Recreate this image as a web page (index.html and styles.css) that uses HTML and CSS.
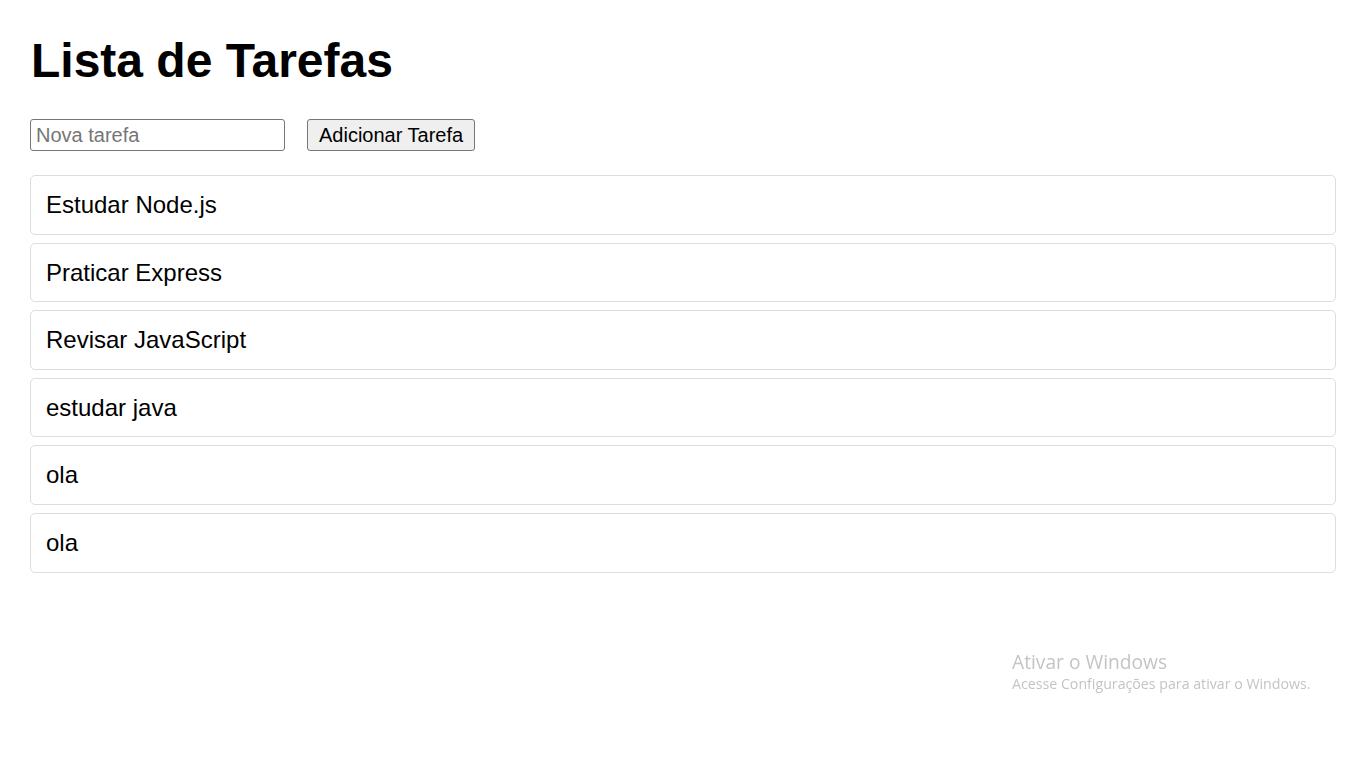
FILE: index.html
```html
<!DOCTYPE html>
<html lang="pt-BR">
<head>
<meta charset="utf-8">
<title>Lista de Tarefas</title>
<link rel="stylesheet" href="styles.css">
</head>
<body>
<main class="page">
  <h1 class="title">Lista de Tarefas</h1>
  <form class="add-form">
    <input class="task-input" type="text" placeholder="Nova tarefa">
    <button class="add-btn" type="button">Adicionar Tarefa</button>
  </form>
  <ul class="task-list">
    <li class="task">Estudar Node.js</li>
    <li class="task">Praticar Express</li>
    <li class="task">Revisar JavaScript</li>
    <li class="task">estudar java</li>
    <li class="task">ola</li>
    <li class="task">ola</li>
  </ul>
</main>
<div class="watermark">
  <div class="wm-title">Ativar o Windows</div>
  <div class="wm-sub">Acesse Configurações para ativar o Windows.</div>
</div>
</body>
</html>
```

FILE: styles.css
```css
html, body {
  margin: 0;
  padding: 0;
  background: #fff;
}
body {
  font-family: "Liberation Sans", Arial, sans-serif;
  color: #000;
}
.page {
  padding: 30px;
}
.title {
  font-size: 48px;
  font-weight: bold;
  line-height: 55px;
  margin: 3px 0 31px 1px;
}
.add-form {
  display: flex;
  align-items: center;
  gap: 22px;
  margin: 0 0 24px 0;
}
.task-input {
  box-sizing: border-box;
  width: 255px;
  height: 32px;
  padding: 0 5px;
  border: 1px solid #767676;
  border-radius: 3px;
  font-family: "Liberation Sans", Arial, sans-serif;
  font-size: 20px;
  color: #000;
  background: #fff;
}
.task-input::placeholder {
  color: #767676;
}
.add-btn {
  box-sizing: border-box;
  height: 32px;
  padding: 0 11px;
  border: 1px solid #767676;
  border-radius: 3px;
  background: #efefef;
  font-family: "Liberation Sans", Arial, sans-serif;
  font-size: 20px;
  color: #000;
}
.task-list {
  list-style: none;
  margin: 0;
  padding: 0;
  display: flex;
  flex-direction: column;
  gap: 8px;
}
.task {
  border: 1px solid #ddd;
  border-radius: 5px;
  padding: 15px;
  font-size: 24px;
  line-height: 27.6px;
}
.watermark {
  position: fixed;
  left: 1012px;
  top: 649px;
  font-family: "Open Sans", "Noto Sans", sans-serif;
  color: #c4c4c4;
}
.wm-title {
  font-size: 19.2px;
  line-height: 25px;
}
.wm-sub {
  font-size: 14.2px;
  line-height: 20px;
}
```
